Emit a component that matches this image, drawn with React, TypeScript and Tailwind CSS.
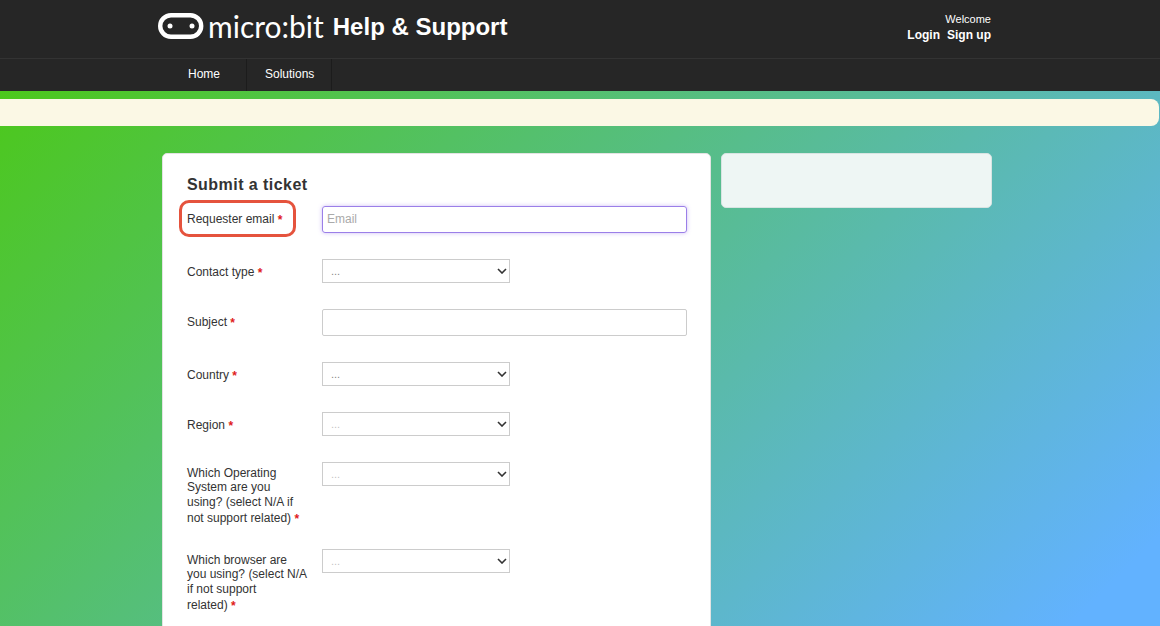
const Star = () => <span className="relative top-[1px] text-[12px] leading-[19px] font-bold text-[#e01b1b]">*</span>;

const labelClass = "w-[122px] shrink-0 pt-[3.5px] text-[12px] leading-[14.5px] text-[#333]";

const Logo = () => (
  <svg width="46" height="26" viewBox="0 0 46 26" className="block">
    <rect x="2.2" y="2.2" width="41" height="21.6" rx="10.8" fill="none" stroke="#fff" strokeWidth="4.4" />
    <circle cx="12" cy="13" r="2.5" fill="#fff" />
    <circle cx="34" cy="13" r="2.5" fill="#fff" />
  </svg>
);

const SelectBox = ({ faded }: { faded?: boolean }) => (
  <div className="relative h-[24px] w-[188px]">
    <select
      className={`block h-full w-full appearance-none border border-[#ccc] bg-white pl-[8px] text-[11px] ${faded ? "text-[#c4c4c4]" : "text-[#888]"}`}
      defaultValue=""
    >
      <option value="">...</option>
    </select>
    <svg width="10" height="6" viewBox="0 0 10 6" className="pointer-events-none absolute right-[3px] top-[9px]">
      <path d="M1 1l4 4 4-4" fill="none" stroke="#333" strokeWidth="1.6" />
    </svg>
  </div>
);

const App = () => {
  return (
    <div className="relative h-[626px] w-[1160px] overflow-hidden bg-[linear-gradient(135deg,#4bc90f_0%,#62b2ff_95%)] font-['Liberation_Sans',Arial,sans-serif]">
      <header className="flex h-[59px] border-b border-[#333] bg-[#262626] pl-[158px] pr-[169px]">
        <div className="flex items-start pt-[13px]">
          <Logo />
          <span className="ml-[4px] font-['Lato',sans-serif] text-[30px] leading-[26px] font-normal text-white">micro:bit</span>
          <h1 className="ml-[9px] text-[24px] leading-[28px] font-bold text-white">Help &amp; Support</h1>
        </div>
        <div className="ml-auto pt-[13px] text-right text-white">
          <div className="text-[11px] leading-[13px]">Welcome</div>
          <div className="mt-[2px] flex justify-end gap-[7px] text-[12px] leading-[14px] font-bold">
            <a>Login</a>
            <a>Sign up</a>
          </div>
        </div>
      </header>

      <nav className="flex h-[32px] bg-[#262626] pl-[162px] text-[12px] text-white">
        <a className="flex w-[85px] items-center border-r border-[#1c1c1c] pb-[2px] pl-[26px]">Home</a>
        <a className="flex w-[85px] items-center border-r border-[#1c1c1c] pb-[2px] pl-[18px]">Solutions</a>
      </nav>

      <div className="mt-[8px] h-[27px] w-[1159px] rounded-r-lg bg-[#fbf8e5]" />

      <main className="mt-[27px] flex items-start gap-[10px] pl-[162px]">
        <section className="h-[600px] w-[549px] rounded-[5px] border border-[#e3e3e3] bg-white pl-[24px] pr-[23px] pt-[21px]">
          <h2 className="mb-[11px] text-[16px] leading-[20px] font-bold tracking-[0.45px] text-[#333]">Submit a ticket</h2>

          <div className="mb-[26px] flex items-start">
            <label className={`${labelClass} relative w-[135px]`}>
              Requester email <Star />
              <span className="absolute left-[-8px] top-[-6px] h-[37px] w-[117px] rounded-[10px] border-[3px] border-[#e5533d]" />
            </label>
            <input
              placeholder="Email"
              className="h-[27px] w-[365px] rounded-[3px] border border-[#9b7fe8] px-[4px] pb-[1px] text-[12px] shadow-[0_0_4px_rgba(130,90,230,0.4)] outline-none placeholder:text-[#aaa]"
            />
          </div>

          <div className="mb-[26px] flex items-start">
            <label className={`${labelClass} w-[135px]`}>Contact type <Star /></label>
            <SelectBox />
          </div>

          <div className="mb-[26px] flex items-start">
            <label className={`${labelClass} w-[135px]`}>Subject <Star /></label>
            <input className="h-[27px] w-[365px] rounded-[2px] border border-[#ccc] outline-none" />
          </div>

          <div className="mb-[26px] flex items-start">
            <label className={`${labelClass} w-[135px]`}>Country <Star /></label>
            <SelectBox />
          </div>

          <div className="mb-[26px] flex items-start">
            <label className={`${labelClass} w-[135px]`}>Region <Star /></label>
            <SelectBox faded />
          </div>

          <div className="mb-[21px] flex items-start">
            <div className="w-[135px] shrink-0">
              <label className={`${labelClass} block`}>
                Which Operating System are you using? (select N/A if not support related) <Star />
              </label>
            </div>
            <SelectBox faded />
          </div>

          <div className="mb-[26px] flex items-start">
            <div className="w-[135px] shrink-0">
              <label className={`${labelClass} block`}>
                Which browser are you using? (select N/A if not support<br />related) <Star />
              </label>
            </div>
            <SelectBox faded />
          </div>
        </section>

        <aside className="h-[55px] w-[271px] rounded-[5px] border border-[#d8e4e2] bg-[#eef6f4]" />
      </main>
    </div>
  );
};

export default App;
